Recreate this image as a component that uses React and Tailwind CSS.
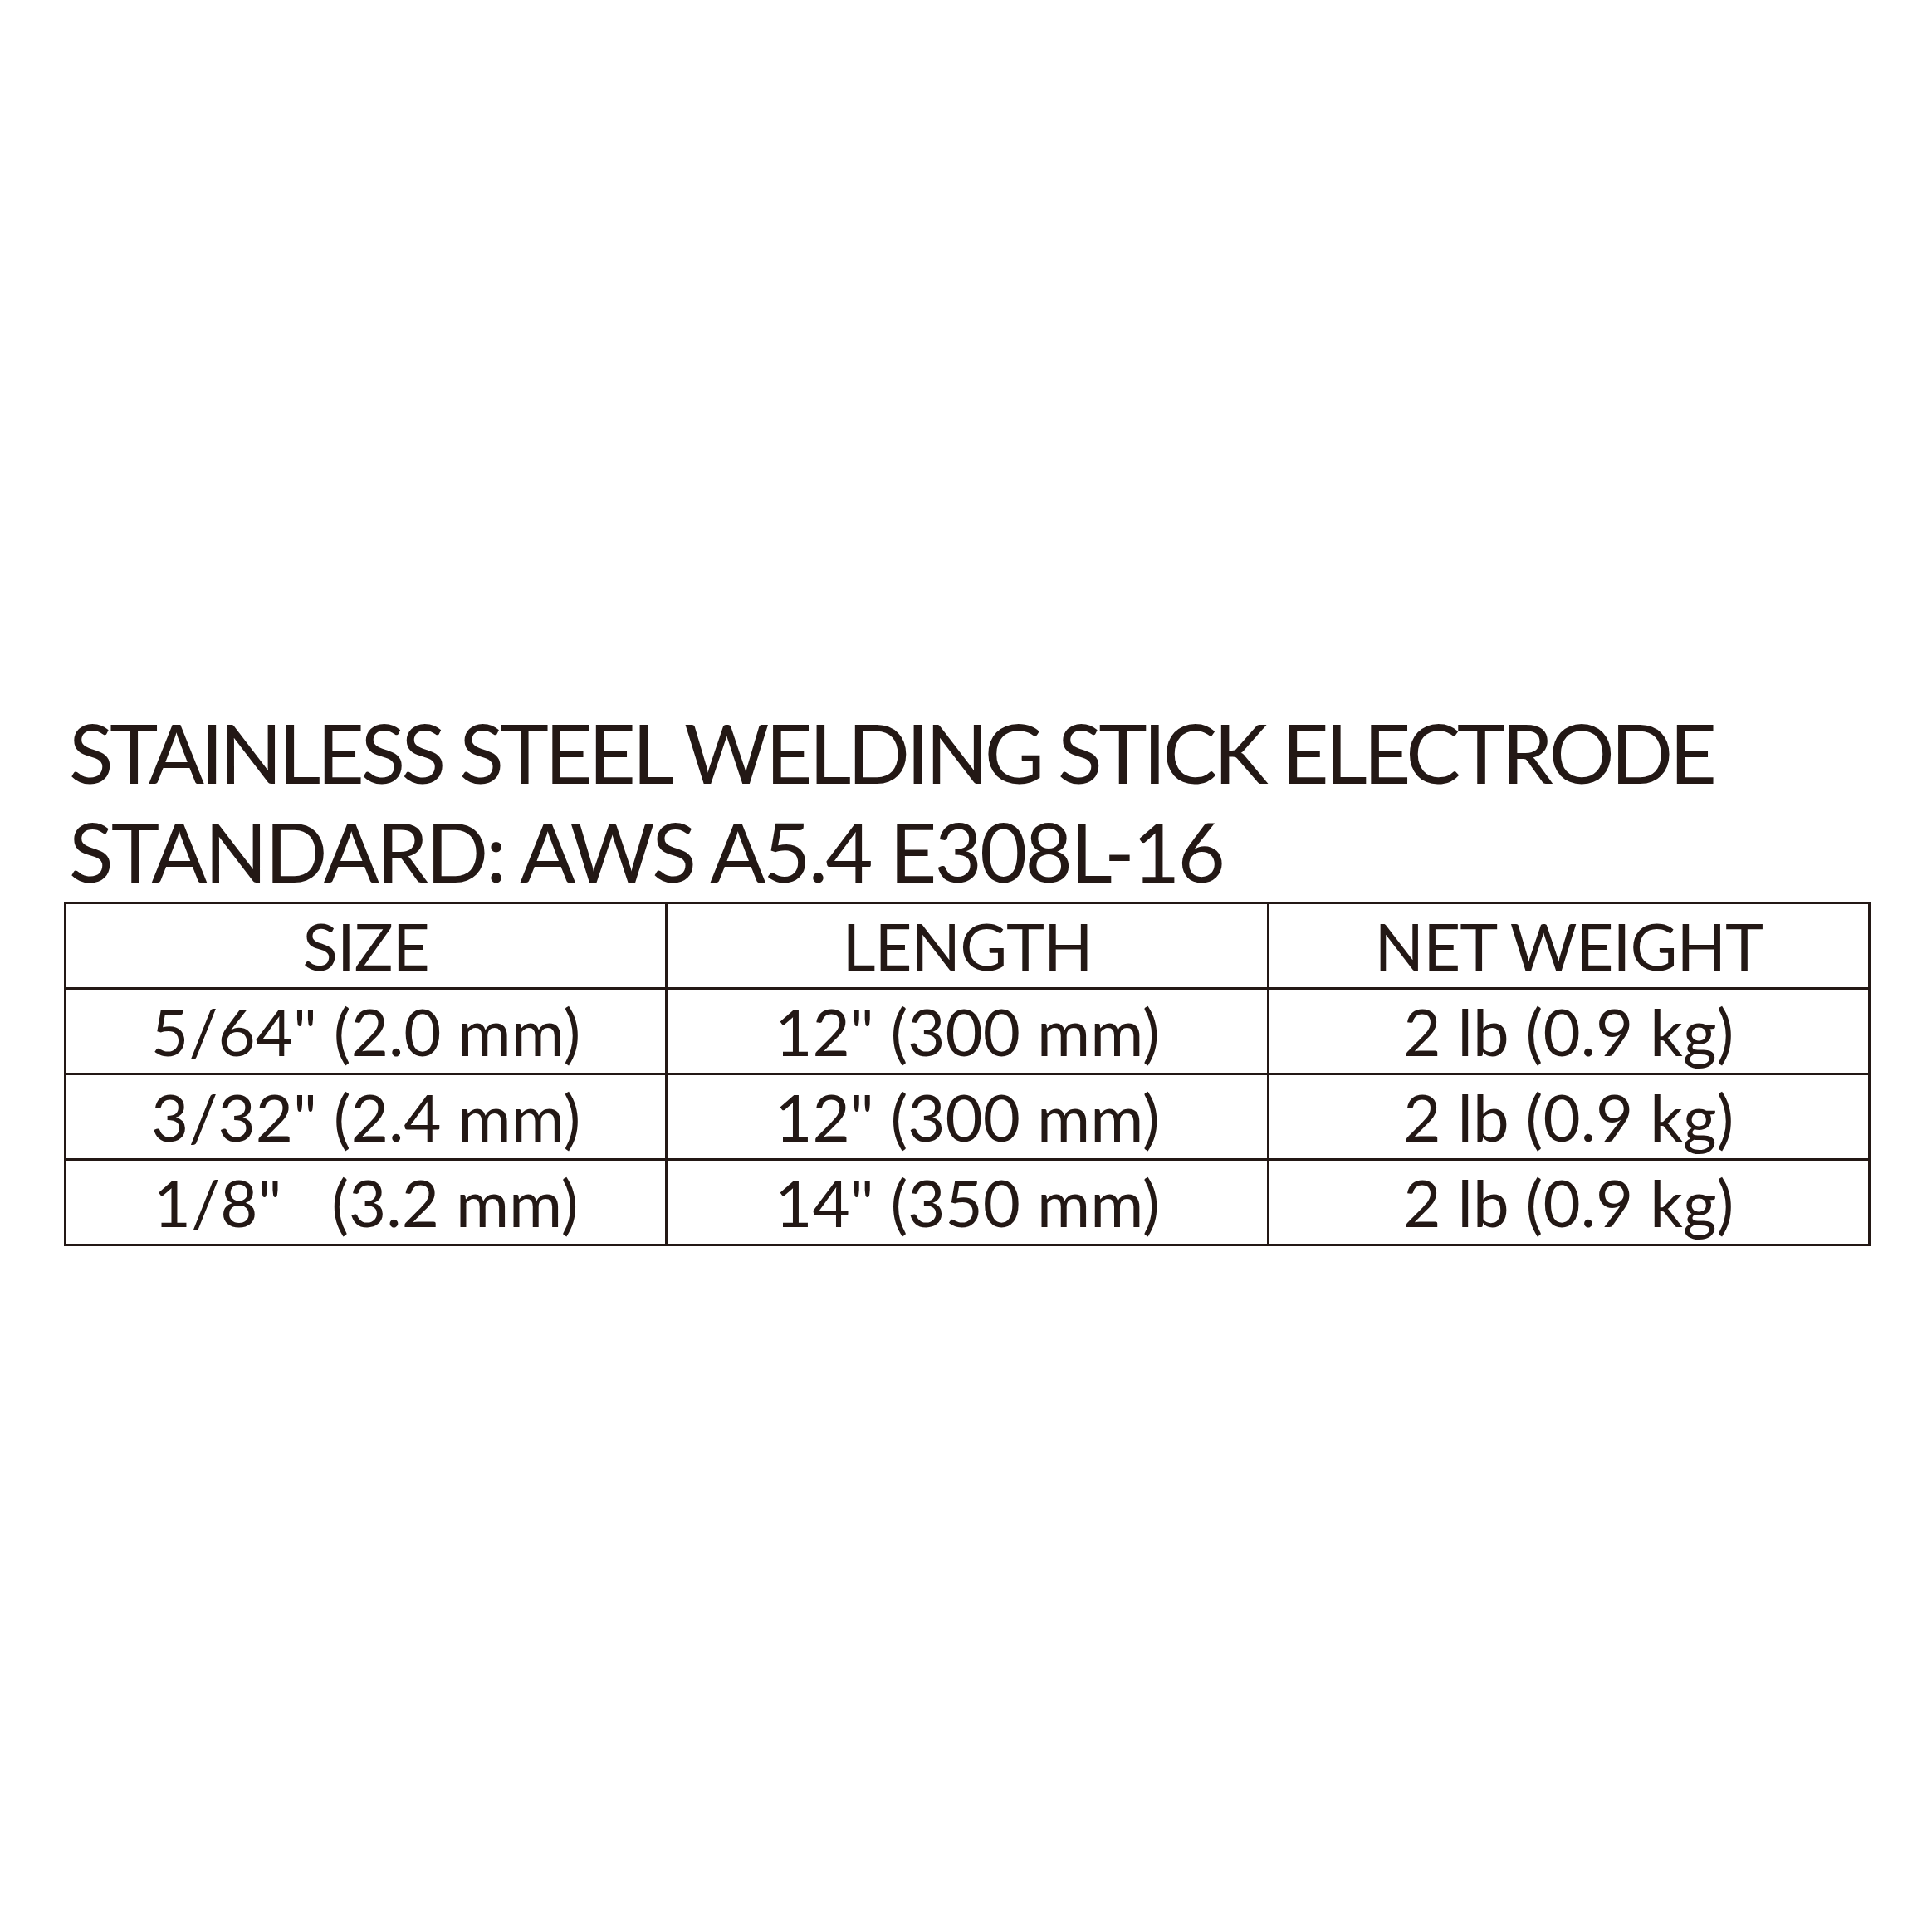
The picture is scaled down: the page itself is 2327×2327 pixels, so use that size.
import React from 'react';

const rows = [
  ['5/64" (2.0 mm)', '12" (300 mm)', '2 lb (0.9 kg)'],
  ['3/32" (2.4 mm)', '12" (300 mm)', '2 lb (0.9 kg)'],
  ['1/8"   (3.2 mm)', '14" (350 mm)', '2 lb (0.9 kg)'],
];

const App = () => {
  return (
    <div className="w-[2327px] h-[2327px] bg-white text-[#231815] font-['Lato',sans-serif] pl-[77px] pt-[846px]">
      <h1 className="ml-[6px] text-[99px] leading-[119px] font-normal">
        <span className="block tracking-[-4.6px]">STAINLESS STEEL WELDING STICK ELECTRODE</span>
        <span className="block tracking-[-2.9px]">STANDARD: AWS A5.4 E308L-16</span>
      </h1>

      <table className="mt-[2px] w-[2176px] border-collapse table-fixed text-[78px] leading-[96px]">
        <thead>
          <tr className="h-[103px]">
            <th className="border-[3px] border-[#231815] font-normal text-center p-0 tracking-[-1px]">SIZE</th>
            <th className="border-[3px] border-[#231815] font-normal text-center p-0 tracking-[-1px]">LENGTH</th>
            <th className="border-[3px] border-[#231815] font-normal text-center p-0 tracking-[-1px]">NET WEIGHT</th>
          </tr>
        </thead>
        <tbody>
          {rows.map((row, i) => (
            <tr key={i} className="h-[103px]">
              {row.map((cell, j) => (
                <td key={j} className="border-[3px] border-[#231815] text-center p-0 whitespace-pre">
                  {cell}
                </td>
              ))}
            </tr>
          ))}
        </tbody>
      </table>
    </div>
  );
};

export default App;
